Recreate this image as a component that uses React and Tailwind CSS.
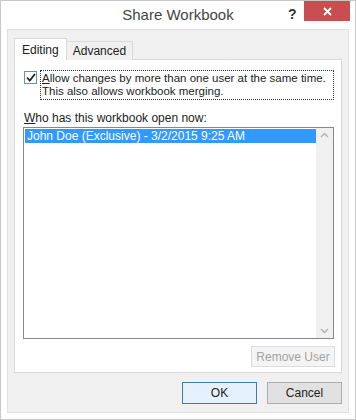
import React from 'react';

const font = { fontFamily: '"Liberation Sans", Arial, sans-serif' };

const TitleBar = () => (
  <div className="relative h-[29px] flex items-center justify-center">
    <span className="text-[15px] text-[#444] mt-[1px]">Share Workbook</span>
    <span className="absolute left-[281px] top-[3px] text-[14px] font-bold text-[#333]">?</span>
    <div className="absolute left-[297px] top-0 w-[46px] h-[20px] bg-[#c74f4f] flex items-center justify-center">
      <svg width="9" height="9" viewBox="0 0 9 9">
        <path d="M1 1 L8 8 M8 1 L1 8" stroke="#fff" strokeWidth="1.8" />
      </svg>
    </div>
  </div>
);

const Tabs = () => (
  <div className="flex items-end h-[22px] -mb-[1px] relative z-10">
    <div className="h-[22px] px-[7px] bg-white border border-b-0 border-[#d9d9d9] flex items-center text-[12px] text-[#222]">
      Editing
    </div>
    <div className="h-[19px] px-[6px] bg-[#f0f0f0] border border-l-0 border-b-0 border-[#d9d9d9] flex items-center text-[12px] text-[#222]">
      Advanced
    </div>
  </div>
);

const Checkbox = () => (
  <div className="w-[13px] h-[13px] border border-[#6b8fb3] bg-white flex items-center justify-center shrink-0 mt-[1px]">
    <svg width="10" height="9" viewBox="0 0 10 9">
      <path d="M1 4.5 L3.8 7.5 L9 1" stroke="#222" strokeWidth="1.8" fill="none" />
    </svg>
  </div>
);

const Scrollbar = () => (
  <div className="w-[17px] bg-[#f0f0f0] flex flex-col justify-between items-center py-[4px]">
    <svg width="9" height="6" viewBox="0 0 9 6">
      <path d="M1 5 L4.5 1.5 L8 5" stroke="#b0b0b0" strokeWidth="1.3" fill="none" />
    </svg>
    <svg width="9" height="6" viewBox="0 0 9 6">
      <path d="M1 1 L4.5 4.5 L8 1" stroke="#b0b0b0" strokeWidth="1.3" fill="none" />
    </svg>
  </div>
);

export default function App() {
  return (
    <div style={font} className="w-[356px] h-[420px] bg-white border border-[#c8c8c8] flex flex-col px-[6px] pb-[6px]">
      <TitleBar />
      <div className="flex-1 bg-[#f0f0f0] border border-[#e0e0e0] flex flex-col px-[6px] pt-[8px] pb-[8px]">
        <Tabs />
        <div className="h-[314px] bg-white border border-[#d9d9d9] flex flex-col pl-[9px] pr-[6px] pt-[10px]">
          <div className="flex items-start gap-[3px]">
            <Checkbox />
            <div className="border border-dotted border-[#333] w-[294px] px-[1px] text-[11.5px] leading-[13px] text-[#222] py-[1px] whitespace-nowrap">
              <div><span className="underline">A</span>llow changes by more than one user at the same time.</div>
              <div>This also allows workbook merging.</div>
            </div>
          </div>
          <div className="mt-[11px] text-[12px] text-[#222] leading-[14px]">
            <span className="underline">W</span>ho has this workbook open now:
          </div>
          <div className="mt-[2px] h-[212px] w-[311px] -ml-[1px] border border-[#828790] flex">
            <div className="flex-1 pt-[1px] pl-[1px]">
              <div className="bg-[#3399ff] text-white text-[12px] leading-[14px] h-[14px] pl-[2px]">
                John Doe (Exclusive) - 3/2/2015 9:25 AM
              </div>
            </div>
            <Scrollbar />
          </div>
          <div className="flex justify-end mt-[7px]">
            <div className="w-[84px] h-[21px] bg-[#f4f4f4] border border-[#dcdcdc] text-[12px] text-[#a3a3a3] flex items-center justify-center">
              Remove User
            </div>
          </div>
        </div>
        <div className="flex justify-end gap-[10px] mt-[9px]">
          <div className="w-[75px] h-[22px] bg-[#e5f1fb] border border-[#3c7fb1] text-[12px] text-[#222] flex items-center justify-center">
            OK
          </div>
          <div className="w-[75px] h-[22px] bg-[#e1e1e1] border border-[#adadad] text-[12px] text-[#222] flex items-center justify-center">
            Cancel
          </div>
        </div>
      </div>
    </div>
  );
}
